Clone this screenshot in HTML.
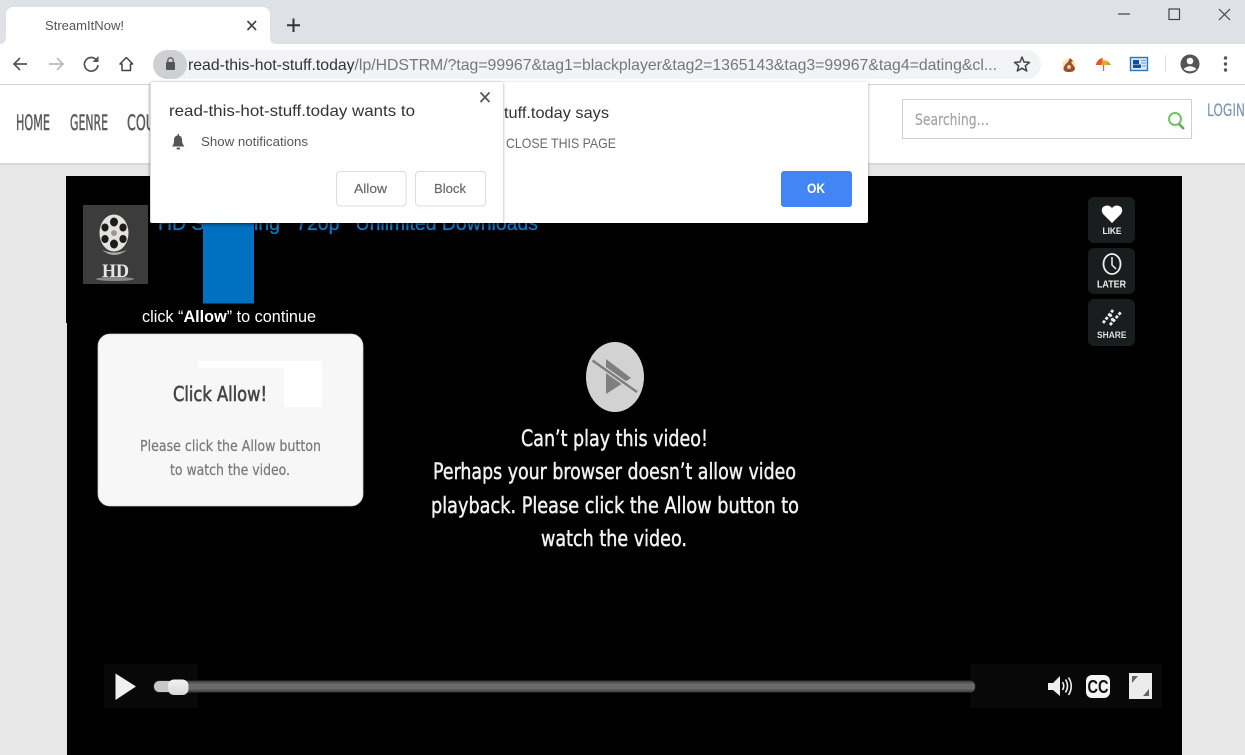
<!DOCTYPE html>
<html><head><meta charset="utf-8"><title>StreamItNow!</title>
<style>
html,body{margin:0;padding:0;background:#e6e6e6;width:1245px;height:755px;overflow:hidden}
svg{display:block;position:absolute;left:0;top:0}
text{font-family:"Liberation Sans",sans-serif}
text.d{font-family:"DejaVu Sans",sans-serif}
</style></head><body>
<svg width="1245" height="755" viewBox="0 0 1245 755" xmlns="http://www.w3.org/2000/svg">
<defs>
<linearGradient id="trk" x1="0" y1="0" x2="0" y2="1"><stop offset="0" stop-color="#3f3f3f"/><stop offset=".3" stop-color="#6a6a6a"/><stop offset=".7" stop-color="#6a6a6a"/><stop offset="1" stop-color="#3f3f3f"/></linearGradient>
<linearGradient id="thb" x1="0" y1="0" x2="0" y2="1"><stop offset="0" stop-color="#f2f2f2"/><stop offset="1" stop-color="#d8d8d8"/></linearGradient>
<filter id="sh" x="-5%" y="-5%" width="110%" height="115%"><feDropShadow dx="0" dy="1" stdDeviation="1.500" flood-color="#000" flood-opacity=".35"/></filter>
</defs>
<!-- browser frame -->
<rect x="0" y="0" width="1245" height="44" fill="#dee1e6"/>
<path d="M0 44 C4 44 6 41 6 37 V15 C6 10 9 7 14 7 H262 C267 7 270 10 270 15 V37 C270 41 272 44 276 44 Z" fill="#fff"/>
<text x="45" y="30" font-size="12.500" fill="#555" textLength="79" lengthAdjust="spacingAndGlyphs">StreamItNow!</text>
<path d="M247.500 21 L256 30 M256 21 L247.500 30" stroke="#444" stroke-width="1.700" fill="none"/>
<path d="M293.500 18.500 V32 M287 25.300 H300" stroke="#333" stroke-width="2" fill="none"/>
<path d="M1118 14 H1130" stroke="#444" stroke-width="1.200"/>
<rect x="1169" y="9" width="10.500" height="10.500" fill="none" stroke="#444" stroke-width="1.200"/>
<path d="M1219 9 L1230 20 M1230 9 L1219 20" stroke="#444" stroke-width="1.200"/>
<rect x="0" y="44" width="1245" height="40" fill="#fff"/>
<rect x="0" y="84" width="1245" height="1" fill="#d2d2d2"/>
<!-- toolbar icons -->
<path d="M27 64 H14 M20 58 L14 64 L20 70" stroke="#555" stroke-width="1.700" fill="none"/>
<path d="M63 64 H49 M57 58 L63 64 L57 70" stroke="#bbb" stroke-width="1.700" fill="none"/>
<path d="M96.500 60 A6.800 6.800 0 1 0 98 65" stroke="#555" stroke-width="1.700" fill="none"/><path d="M98.500 56 V62 H92.500 Z" fill="#555"/>
<path d="M120 64 L126.300 57.500 L132.700 64 H130.500 V70.500 H122 V64 Z" stroke="#444" stroke-width="1.500" fill="none" stroke-linejoin="round"/>
<rect x="153" y="50" width="888" height="29" rx="14.500" fill="#f1f3f4"/>
<rect x="153" y="50" width="34" height="29" rx="14.500" fill="#cfd0d1"/>
<rect x="166" y="62" width="9" height="8" rx="1" fill="#555"/><path d="M167.800 62 V60.500 A2.700 2.700 0 0 1 173.200 60.500 V62" stroke="#555" stroke-width="1.300" fill="none"/>
<text x="188" y="70" font-size="16" fill="#777" textLength="809" lengthAdjust="spacingAndGlyphs"><tspan fill="#333">read-this-hot-stuff.today</tspan>/lp/HDSTRM/?tag=99967&amp;tag1=blackplayer&amp;tag2=1365143&amp;tag3=99967&amp;tag4=dating&amp;cl...</text>
<path d="M1022 57 L1024 62 L1029.500 62.400 L1025.300 65.800 L1026.700 71 L1022 68.200 L1017.300 71 L1018.700 65.800 L1014.500 62.400 L1020 62 Z" stroke="#444" stroke-width="1.500" fill="none" stroke-linejoin="round"/>
<!-- extensions -->
<circle cx="1069" cy="65" r="6.500" fill="#f6e7b6"/><path d="M1070 58 L1073 61 L1071 62 L1075 68 Q1075 72 1069 72 Q1063 72 1063.500 68 Q1065 64 1068 62 Z" fill="#9c4e24"/><circle cx="1069" cy="67" r="2" fill="#e8c9a8"/>
<path d="M1096 65 A8 7.500 0 0 1 1111 65 Z" fill="#f2a22e"/><path d="M1096 65 A8 7.500 0 0 1 1103 58 L1101 65 Z" fill="#e5532d"/><path d="M1107 65 A8 7 0 0 0 1104 58 L1111 65 Z" fill="#8dbb3c"/><path d="M1103.500 65 V71" stroke="#b07a50" stroke-width="1.300"/>
<rect x="1130.500" y="57.500" width="17" height="13" fill="#dbe8f5" stroke="#2d74c4" stroke-width="1.400"/><rect x="1133" y="60" width="6" height="4" fill="#134f96"/><rect x="1133" y="64.500" width="8" height="3.500" fill="#134f96"/><path d="M1141 60.500 H1146 M1141 63 H1146 M1142 66 H1146" stroke="#6b9cd0" stroke-width="1"/>
<rect x="1165" y="55" width="1" height="17" fill="#dadce0"/>
<circle cx="1190" cy="64" r="9.500" fill="#555"/><circle cx="1190" cy="61" r="3.300" fill="#fff"/><path d="M1183.500 69 Q1190 63.500 1196.500 69 Q1190 73.500 1183.500 69 Z" fill="#fff"/>
<circle cx="1225.500" cy="58" r="1.700" fill="#555"/><circle cx="1225.500" cy="64" r="1.700" fill="#555"/><circle cx="1225.500" cy="70" r="1.700" fill="#555"/>
<!-- site header -->
<rect x="0" y="85" width="1245" height="78" fill="#fff"/>
<rect x="0" y="163" width="1245" height="2" fill="#d9d9d9"/>
<rect x="0" y="165" width="1245" height="590" fill="#e7e7e7"/>
<g font-size="21" fill="#5b5b5b" stroke="#5b5b5b" stroke-width=".5">
<text class="d" x="16" y="130" textLength="34" lengthAdjust="spacingAndGlyphs">HOME</text>
<text class="d" x="70" y="130" textLength="38" lengthAdjust="spacingAndGlyphs">GENRE</text>
<text class="d" x="127" y="130" textLength="28" lengthAdjust="spacingAndGlyphs">COU</text>
</g>
<rect x="902.500" y="99.500" width="289" height="39" fill="#fff" stroke="#d0d0d0"/>
<text class="d" x="915" y="125" font-size="16" fill="#a5a5a5" stroke="#a5a5a5" stroke-width=".25" textLength="74" lengthAdjust="spacingAndGlyphs">Searching…</text>
<circle cx="1175" cy="119" r="6" fill="none" stroke="#74c169" stroke-width="2"/><path d="M1179 124 L1184 129" stroke="#5cab52" stroke-width="2.400"/>
<text class="d" x="1207" y="116" font-size="17" fill="#7d96b3" stroke="#7d96b3" stroke-width=".2" textLength="38" lengthAdjust="spacingAndGlyphs">LOGIN</text>
<!-- video -->
<rect x="67" y="176" width="1115" height="579" fill="#000"/>
<rect x="66" y="176" width="1" height="147" fill="#000"/>
<text x="158" y="230" font-size="20" fill="#1175bb" stroke="#1175bb" stroke-width=".35" textLength="380" lengthAdjust="spacingAndGlyphs" xml:space="preserve">HD Streaming   720p   Unlimited Downloads</text>
<rect x="203" y="220" width="51" height="83.500" fill="#0070c0"/>
<rect x="83" y="205" width="65" height="79" fill="#3c3c3c"/>
<ellipse cx="114" cy="233" rx="14.500" ry="18.500" fill="#e4e2dc"/>
<g fill="#1c1c1c"><ellipse cx="114" cy="222" rx="4" ry="4.500"/><ellipse cx="114" cy="244" rx="4" ry="4.500"/><ellipse cx="105" cy="227.500" rx="3.600" ry="4"/><ellipse cx="123" cy="227.500" rx="3.600" ry="4"/><ellipse cx="105" cy="239" rx="3.600" ry="4"/><ellipse cx="123" cy="239" rx="3.600" ry="4"/></g>
<circle cx="114" cy="233" r="3" fill="#999"/>
<path d="M102 250 Q114 260 127 250 Q114 255 102 250 Z" fill="#aaa"/>
<text x="102" y="277" font-size="19" font-weight="700" fill="#e6e6e6" textLength="27" lengthAdjust="spacingAndGlyphs" style="font-family:'Liberation Serif',serif">HD</text>
<ellipse cx="115" cy="279" rx="19" ry="2" fill="#aaa" opacity=".7"/>
<text x="142" y="322" font-size="17" fill="#fff" textLength="174" lengthAdjust="spacingAndGlyphs">click “<tspan font-weight="700">Allow</tspan>” to continue</text>
<!-- card -->
<rect x="98" y="334" width="265" height="172" rx="12" fill="#f7f7f7" stroke="#ccc" stroke-width=".8"/>
<rect x="198" y="361" width="124" height="7" fill="#fff"/><rect x="284" y="361" width="38" height="46" fill="#fff"/>
<text class="d" x="173" y="401" font-size="20" fill="#444" stroke="#444" stroke-width=".6" textLength="94" lengthAdjust="spacingAndGlyphs">Click Allow!</text>
<text class="d" x="140" y="451" font-size="15" fill="#7a7a7a" stroke="#7a7a7a" stroke-width=".25" textLength="181" lengthAdjust="spacingAndGlyphs">Please click the Allow button</text>
<text class="d" x="170" y="475" font-size="15" fill="#7a7a7a" stroke="#7a7a7a" stroke-width=".25" textLength="120" lengthAdjust="spacingAndGlyphs">to watch the video.</text>
<!-- center message -->
<ellipse cx="615" cy="377" rx="29" ry="35" fill="#d2d2d2"/>
<path d="M606 359 L631 378 L606 394 Z" fill="#7e7e7e"/>
<path d="M592.500 360.500 L637 392" stroke="#d2d2d2" stroke-width="5"/>
<path d="M592.500 360.500 L637 392" stroke="#7e7e7e" stroke-width="2.400"/>
<g font-size="22" fill="#f2f2f2" stroke="#f2f2f2" stroke-width=".45">
<text class="d" x="521" y="446" textLength="187" lengthAdjust="spacingAndGlyphs">Can’t play this video!</text>
<text class="d" x="433" y="479" textLength="363" lengthAdjust="spacingAndGlyphs">Perhaps your browser doesn’t allow video</text>
<text class="d" x="431" y="513" textLength="368" lengthAdjust="spacingAndGlyphs">playback. Please click the Allow button to</text>
<text class="d" x="541" y="546" textLength="146" lengthAdjust="spacingAndGlyphs">watch the video.</text>
</g>
<!-- side buttons -->
<g fill="#1a1d1d"><rect x="1088" y="197" width="47" height="46" rx="6"/><rect x="1088" y="248" width="47" height="46" rx="6"/><rect x="1088" y="299" width="47" height="47" rx="6"/></g>
<path d="M1112 223 L1103 214 Q1100.500 210 1103 207 Q1108 203.500 1112 208 Q1116 203.500 1121 207 Q1123.500 210 1121 214 Z" fill="#fff"/>
<text x="1102.500" y="234" font-size="9" font-weight="700" fill="#eee" textLength="19" lengthAdjust="spacingAndGlyphs">LIKE</text>
<ellipse cx="1112" cy="264" rx="8.500" ry="10" fill="none" stroke="#eee" stroke-width="1.800"/><path d="M1112 257 V265 L1116 269" stroke="#eee" stroke-width="1.500" fill="none"/>
<text x="1097" y="287.500" font-size="10" font-weight="700" fill="#eee" textLength="29" lengthAdjust="spacingAndGlyphs">LATER</text>
<path d="M1103 323 L1113 310 M1110 325 L1121 312 M1110 314 L1113 321" stroke="#eee" stroke-width="2.800" stroke-dasharray="3 1.500" fill="none"/>
<text x="1097" y="338" font-size="9.500" font-weight="700" fill="#ddd" textLength="29.500" lengthAdjust="spacingAndGlyphs">SHARE</text>
<!-- controls -->
<rect x="104" y="664" width="94" height="44" fill="#080808"/>
<rect x="970" y="664" width="192" height="44" fill="#080808"/>
<path d="M115.500 673.500 L136 686.500 L115.500 700 Z" fill="#f0f0f0"/>
<rect x="154" y="681" width="821" height="11" rx="5" fill="url(#trk)" stroke="#444" stroke-width=".8"/>
<rect x="154" y="681" width="24" height="11" rx="5.500" fill="#c8c8c8"/>
<rect x="168" y="679.500" width="20.500" height="15.500" rx="6" fill="url(#thb)"/>
<path d="M1048 683 H1053 L1060 676 V696 L1053 690 H1048 Z" fill="#efefef"/>
<path d="M1062.500 682 Q1065 686 1062.500 690 M1065.500 679.500 Q1069.500 686 1065.500 692.500 M1068.500 677.500 Q1074 686 1068.500 695" stroke="#efefef" stroke-width="1.600" fill="none"/>
<rect x="1086" y="675" width="24" height="23" rx="6" fill="#f5f5f5"/>
<text x="1087.500" y="693" font-size="18" font-weight="700" fill="#111" textLength="21" lengthAdjust="spacingAndGlyphs">CC</text>
<rect x="1129" y="673" width="23" height="26" fill="#ececec"/>
<path d="M1132 676 H1138 L1132 683 Z M1149 696 H1143 L1149 689 Z" fill="#666"/>
<!-- JS dialog -->
<rect x="150" y="82" width="718" height="141" rx="2" fill="#fff" filter="url(#sh)"/>
<text x="504" y="118" font-size="16" fill="#333" textLength="105" lengthAdjust="spacingAndGlyphs">tuff.today says</text>
<text x="506" y="148" font-size="14" fill="#6b6b6b" textLength="110" lengthAdjust="spacingAndGlyphs">CLOSE THIS PAGE</text>
<rect x="781" y="171" width="71" height="36" rx="3" fill="#4285f4"/>
<text x="807" y="193" font-size="14" font-weight="700" fill="#fff" textLength="18" lengthAdjust="spacingAndGlyphs">OK</text>
<!-- Permission dialog -->
<rect x="151" y="82" width="352" height="141" rx="2" fill="#fff" filter="url(#sh)"/>
<text x="169" y="116" font-size="16" fill="#333" textLength="246" lengthAdjust="spacingAndGlyphs">read-this-hot-stuff.today wants to</text>
<path d="M480.500 92.500 L489.500 102 M489.500 92.500 L480.500 102" stroke="#555" stroke-width="1.700"/>
<path d="M172 146.500 C174 144 174 142 174 140 C174 137 176 135.500 178 135.500 C180.500 135.500 182 137 182 140 C182 142 182.500 144 184.500 146.500 Z" fill="#555"/><rect x="176.500" y="147.500" width="3.500" height="2" rx="1" fill="#555"/><rect x="177.500" y="134" width="1.500" height="2" fill="#555"/>
<text x="201" y="146" font-size="13" fill="#555" textLength="107" lengthAdjust="spacingAndGlyphs">Show notifications</text>
<rect x="336.500" y="171.500" width="69.500" height="34.500" rx="3.500" fill="#fff" stroke="#dcdcdc"/>
<text x="354" y="193" font-size="13" fill="#6a6a6a" stroke="#6a6a6a" stroke-width=".2" textLength="33" lengthAdjust="spacingAndGlyphs">Allow</text>
<rect x="415.500" y="171.500" width="70" height="34.500" rx="3.500" fill="#fff" stroke="#dcdcdc"/>
<text x="434" y="193" font-size="13" fill="#6a6a6a" stroke="#6a6a6a" stroke-width=".2" textLength="32" lengthAdjust="spacingAndGlyphs">Block</text>
</svg>
</body></html>
